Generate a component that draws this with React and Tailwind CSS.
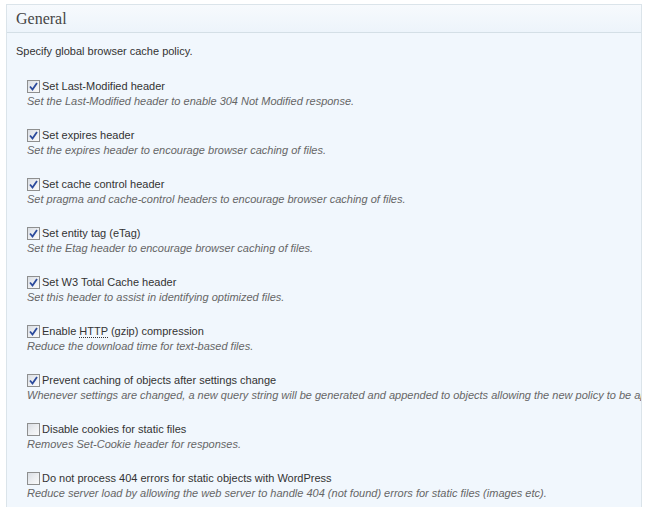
import React from "react";

const options = [
  { label: "Set Last-Modified header", desc: "Set the Last-Modified header to enable 304 Not Modified response.", checked: true },
  { label: "Set expires header", desc: "Set the expires header to encourage browser caching of files.", checked: true },
  { label: "Set cache control header", desc: "Set pragma and cache-control headers to encourage browser caching of files.", checked: true },
  { label: "Set entity tag (eTag)", desc: "Set the Etag header to encourage browser caching of files.", checked: true },
  { label: "Set W3 Total Cache header", desc: "Set this header to assist in identifying optimized files.", checked: true },
  { label: "gzip", desc: "Reduce the download time for text-based files.", checked: true },
  { label: "Prevent caching of objects after settings change", desc: "Whenever settings are changed, a new query string will be generated and appended to objects allowing the new policy to be applied.", checked: true },
  { label: "Disable cookies for static files", desc: "Removes Set-Cookie header for responses.", checked: false },
  { label: "Do not process 404 errors for static objects with WordPress", desc: "Reduce server load by allowing the web server to handle 404 (not found) errors for static files (images etc).", checked: false },
];

function Checkbox({ checked }) {
  return (
    <span className="inline-flex h-[13px] w-[13px] shrink-0 items-center justify-center border border-[#8e8f8f] bg-gradient-to-br from-[#d9dde3] via-[#eceef1] to-[#fafafa]">
      {checked && (
        <svg width="9" height="9" viewBox="0 0 9 9">
          <path d="M1 4.5 L3.5 7.5 L8 1" fill="none" stroke="#2b4a9c" strokeWidth="1.8" />
        </svg>
      )}
    </span>
  );
}

function Label({ text }) {
  if (text === "gzip") {
    return (
      <span>
        Enable <abbr className="no-underline border-b border-dotted border-[#333]">HTTP</abbr> (gzip) compression
      </span>
    );
  }
  return <span>{text}</span>;
}

export default function App() {
  return (
    <div className="min-h-[507px] w-[651px] bg-white pl-[6px] pt-[4px] text-[11px] text-[#333]" style={{ fontFamily: '"Liberation Sans", Arial, sans-serif' }}>
      <div className="h-[520px] w-[636px] overflow-hidden border border-[#dbe4ea] bg-[#f1f7fd]">
        {/* header */}
        <div className="flex h-[28px] items-center border-b border-[#d4dfe6] bg-gradient-to-b from-[#f7fafd] to-[#edf4fb] pl-[9px]">
          <h3 className="text-[16px] text-[#464646]" style={{ fontFamily: '"Liberation Serif", Georgia, serif' }}>General</h3>
        </div>

        <div className="pl-[9px] pt-[10px]">
          <p className="leading-[16px]">Specify global browser cache policy.</p>

          <div className="mt-[20px] flex flex-col gap-[19px] pl-[11px]">
            {options.map((o, i) => (
              <div key={i}>
                <label className="flex h-[15px] items-center gap-[1px] whitespace-nowrap">
                  <Checkbox checked={o.checked} />
                  <span className="pl-[1px]">
                    <Label text={o.label} />
                  </span>
                </label>
                <div className="h-[15px] whitespace-nowrap italic leading-[15px] text-[#666]">{o.desc}</div>
              </div>
            ))}
          </div>
        </div>
      </div>
    </div>
  );
}
